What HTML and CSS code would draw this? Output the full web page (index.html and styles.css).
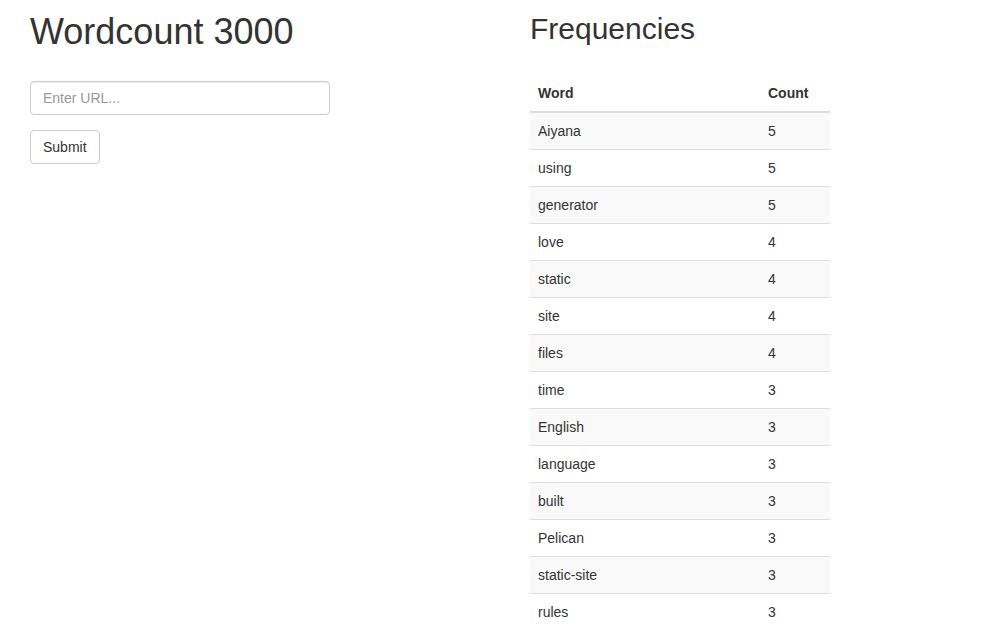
FILE: index.html
```html
<!DOCTYPE html>
<html>
<head>
<meta charset="utf-8">
<title>Wordcount 3000</title>
<link rel="stylesheet" href="styles.css">
</head>
<body>
<div class="page">
  <div class="col-left">
    <h1 class="title">Wordcount 3000</h1>
    <form class="url-form">
      <input class="url-input" type="text" placeholder="Enter URL...">
      <button class="btn" type="button">Submit</button>
    </form>
  </div>
  <div class="col-right">
    <h2 class="subtitle">Frequencies</h2>
    <table class="freq-table">
      <thead>
        <tr><th class="c-word">Word</th><th class="c-count">Count</th></tr>
      </thead>
      <tbody>
        <tr><td>Aiyana</td><td>5</td></tr>
        <tr><td>using</td><td>5</td></tr>
        <tr><td>generator</td><td>5</td></tr>
        <tr><td>love</td><td>4</td></tr>
        <tr><td>static</td><td>4</td></tr>
        <tr><td>site</td><td>4</td></tr>
        <tr><td>files</td><td>4</td></tr>
        <tr><td>time</td><td>3</td></tr>
        <tr><td>English</td><td>3</td></tr>
        <tr><td>language</td><td>3</td></tr>
        <tr><td>built</td><td>3</td></tr>
        <tr><td>Pelican</td><td>3</td></tr>
        <tr><td>static-site</td><td>3</td></tr>
        <tr><td>rules</td><td>3</td></tr>
      </tbody>
    </table>
  </div>
</div>
</body>
</html>
```
FILE: styles.css
```css
* { box-sizing: border-box; }
html, body { margin: 0; padding: 0; }
body {
  font-family: "Liberation Sans", Arial, sans-serif;
  font-size: 14px;
  line-height: 20px;
  color: #333;
  background: #fff;
}
.page {
  display: flex;
  padding: 12px 0 0 30px;
}
.col-left { width: 500px; }
.col-right { width: 300px; }
.title {
  margin: 0;
  font-size: 36px;
  font-weight: 500;
  line-height: 1.1;
}
.url-form {
  display: flex;
  flex-direction: column;
  align-items: flex-start;
  margin-top: 29px;
}
.url-input {
  width: 300px;
  height: 34px;
  padding: 6px 12px;
  font-family: inherit;
  font-size: 14px;
  color: #555;
  border: 1px solid #ccc;
  border-radius: 4px;
  box-shadow: inset 0 1px 1px rgba(0,0,0,.075);
  outline: none;
}
.url-input::placeholder { color: #999; }
.btn {
  margin-top: 15px;
  height: 34px;
  padding: 6px 12px;
  font-family: inherit;
  font-size: 14px;
  line-height: 20px;
  color: #333;
  background: #fff;
  border: 1px solid #ccc;
  border-radius: 4px;
}
.subtitle {
  margin: 0;
  font-size: 30px;
  font-weight: 500;
  line-height: 1.1;
}
.freq-table {
  margin-top: 30px;
  width: 300px;
  border-collapse: collapse;
  border-spacing: 0;
}
.freq-table th, .freq-table td {
  padding: 8px;
  line-height: 20px;
  text-align: left;
  vertical-align: top;
}
.freq-table th {
  font-weight: bold;
  border-bottom: 2px solid #ddd;
}
.freq-table td { border-top: 1px solid #ddd; }
.freq-table tbody tr:first-child td { border-top: 0; }
.freq-table tbody tr:nth-child(odd) { background: #f9f9f9; }
.c-word { width: 230px; }
.c-count { width: 70px; }
```
